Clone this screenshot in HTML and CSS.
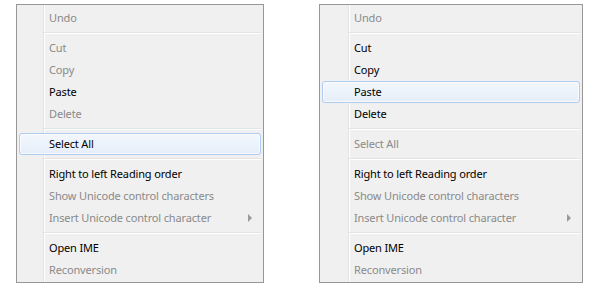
FILE: index.html
```html
<!DOCTYPE html>
<html>
<head>
<meta charset="utf-8">
<link rel="stylesheet" href="styles.css">
</head>
<body>
<div class="stage">
  <div class="menu menu-left">
    <div class="item disabled">Undo</div>
    <div class="sep"></div>
    <div class="item disabled">Cut</div>
    <div class="item disabled">Copy</div>
    <div class="item">Paste</div>
    <div class="item disabled">Delete</div>
    <div class="sep"></div>
    <div class="item hot">Select All</div>
    <div class="sep"></div>
    <div class="item">Right to left Reading order</div>
    <div class="item disabled">Show Unicode control characters</div>
    <div class="item disabled sub">Insert Unicode control character<span class="arrow"></span></div>
    <div class="sep"></div>
    <div class="item">Open IME</div>
    <div class="item disabled">Reconversion</div>
  </div>
  <div class="menu menu-right">
    <div class="item disabled">Undo</div>
    <div class="sep"></div>
    <div class="item">Cut</div>
    <div class="item">Copy</div>
    <div class="item hot">Paste</div>
    <div class="item">Delete</div>
    <div class="sep"></div>
    <div class="item disabled">Select All</div>
    <div class="sep"></div>
    <div class="item">Right to left Reading order</div>
    <div class="item disabled">Show Unicode control characters</div>
    <div class="item disabled sub">Insert Unicode control character<span class="arrow"></span></div>
    <div class="sep"></div>
    <div class="item">Open IME</div>
    <div class="item disabled">Reconversion</div>
  </div>
</div>
</body>
</html>
```
FILE: styles.css
```css
html, body {
  margin: 0;
  padding: 0;
  background: #ffffff;
}
body {
  font-family: "Noto Sans", "Open Sans", sans-serif;
  font-size: 11px;
  color: #000;
}
.stage {
  display: flex;
  align-items: flex-start;
  gap: 55px;
  padding: 4px 0 0 16px;
}
.menu {
  --gutter: 26px;
  box-sizing: border-box;
  border: 1px solid #979797;
  padding: 2px 2px 1px 2px;
  display: flex;
  flex-direction: column;
  background: linear-gradient(to right,
    #f0f0f0 0, #f0f0f0 var(--gutter),
    #e2e3e3 var(--gutter), #e2e3e3 calc(var(--gutter) + 1px),
    #ffffff calc(var(--gutter) + 1px), #ffffff calc(var(--gutter) + 2px),
    #f0f0f0 calc(var(--gutter) + 2px)) no-repeat;
  background-color: #f0f0f0;
}
.menu-left { width: 248px; }
.menu-right { width: 264px; --gutter: 28px; }
.item {
  box-sizing: border-box;
  height: 22px;
  line-height: 18px;
  padding: 0 0 0 calc(var(--gutter) + 3px);
  display: flex;
  align-items: center;
  white-space: nowrap;
  border: 1px solid transparent;
  border-radius: 3px;
  letter-spacing: -0.15px;
}
.item.disabled { color: #8a8a8a; }
.item.hot {
  border-color: #aecbf0;
  background: linear-gradient(#f3f7fc, #e6eefa);
  box-shadow: inset 0 0 0 1px rgba(255,255,255,0.7);
}
.sub { position: relative; }
.arrow {
  margin-left: auto;
  margin-right: 8px;
  width: 0;
  height: 0;
  border-left: 4px solid #9a9a9a;
  border-top: 4px solid transparent;
  border-bottom: 4px solid transparent;
}
.sep {
  height: 8px;
  margin-left: calc(var(--gutter) - 1px);
  position: relative;
  background: linear-gradient(to bottom,
    transparent 0, transparent 3px,
    #e2e3e3 3px, #e2e3e3 4px,
    #ffffff 4px, #ffffff 5px,
    transparent 5px) no-repeat;
}
```
